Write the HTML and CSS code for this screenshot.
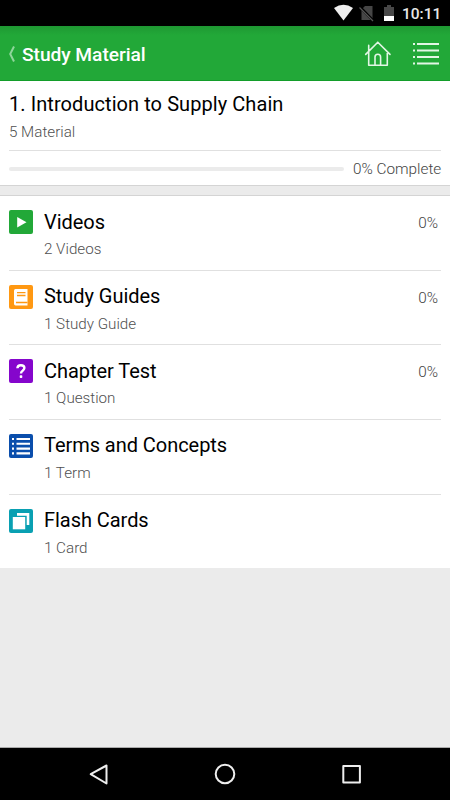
FILE: index.html
```html
<!DOCTYPE html>
<html lang="en">
<head>
<meta charset="utf-8">
<title>Study Material</title>
<link rel="stylesheet" href="styles.css">
</head>
<body>
<div class="status">
  <svg class="status-icons" width="64" height="26" viewBox="0 0 64 26">
    <path d="M0 8Q9.5 1.5 19 8L9.500 20.5Z" fill="#eee"/>
    <path d="M31 6H38.500V20H27.500V9.500Z" fill="#464646"/>
    <path d="M26 7L39.500 21" stroke="#000" stroke-width="2.600"/>
    <path d="M25.500 7.500L39 21" stroke="#555" stroke-width="1.200"/>
    <path d="M50 7H53V5H57V7H60V16H50Z" fill="#484848"/>
    <path d="M50 16H60V21H50Z" fill="#fff"/>
  </svg>
  <span class="clock">10:11</span>
</div>
<header class="bar">
  <svg class="back" width="8" height="18" viewBox="0 0 8 18"><path d="M6 1.5L2.2 9L6 16.5" fill="none" stroke="#8fd69b" stroke-width="2"/></svg>
  <h1 class="title">Study Material</h1>
  <svg class="home" width="28" height="28" viewBox="0 0 28 28" fill="none" stroke="#e2f6e5" stroke-width="1.6" stroke-linejoin="round" stroke-linecap="round"><path d="M1.7 14.4L13.8 2.2L26 14.4M4.7 11.5V25.2H23.3V11.8M4.7 10.5V5.4M11 25V17Q11 14.2 13.8 14.2Q16.6 14.2 16.6 17V25"/></svg>
  <svg class="menu" width="26" height="24" viewBox="0 0 26 24" stroke="#e2f6e5" stroke-width="2"><path d="M0 2H2M4 2H26M0 8.5H2M4 8.5H26M0 15H2M4 15H26M0 21.5H2M4 21.5H26"/></svg>
</header>
<section class="chapter">
  <h2 class="name">1. Introduction to Supply Chain</h2>
  <p class="sub">5 Material</p>
  <div class="progress"><span class="track"></span><span class="complete">0% Complete</span></div>
</section>
<ul class="list">
  <li class="item">
    <svg class="icon" viewBox="0 0 24 24"><rect width="24" height="24" rx="2" fill="#22a838"/><path d="M8.2 7V17.5L17.5 12.2Z" fill="#fff"/></svg>
    <div class="text"><h3 class="name">Videos</h3><p class="sub">2 Videos</p></div><span class="pct">0%</span>
  </li>
  <li class="item">
    <svg class="icon" viewBox="0 0 24 24"><rect width="24" height="24" rx="2" fill="#ff9812"/><path d="M6.5 4H18.500V20.500H6.500Q5 20.500 5 18.500V5.5Q5 4 6.5 4Z" fill="#fff"/><path d="M8 7.7H16.500M8 10.5H16.500M7 17.500H18.500" stroke="#ff9812" stroke-width="1.3"/></svg>
    <div class="text"><h3 class="name">Study Guides</h3><p class="sub">1 Study Guide</p></div><span class="pct">0%</span>
  </li>
  <li class="item">
    <svg class="icon" viewBox="0 0 24 24"><rect width="24" height="24" rx="2" fill="#8506cc"/><path d="M8.4 9.3Q8.5 6.2 11.9 6.2Q15.4 6.2 15.4 9Q15.4 10.3 13.6 11.7Q12 12.8 12 14.5" fill="none" stroke="#fff" stroke-width="2.4"/><rect x="10.7" y="16.3" width="2.6" height="2.6" rx=".7" fill="#fff"/></svg>
    <div class="text"><h3 class="name">Chapter Test</h3><p class="sub">1 Question</p></div><span class="pct">0%</span>
  </li>
  <li class="item">
    <svg class="icon" viewBox="0 0 24 24"><rect width="24" height="24" rx="2" fill="#0a4eac"/><path d="M3 5H5M7.5 5H21M3 9.8H5M7.5 9.8H21M3 14.6H5M7.5 14.6H21M3 19.4H5M7.5 19.4H21" stroke="#fff" stroke-width="2.1"/></svg>
    <div class="text"><h3 class="name">Terms and Concepts</h3><p class="sub">1 Term</p></div>
  </li>
  <li class="item">
    <svg class="icon" viewBox="0 0 24 24"><rect width="24" height="24" rx="2" fill="#09a0b2"/><path d="M8 4H20.3V16H17.7V6.7H8Z" fill="#fff"/><rect x="3.8" y="8" width="12.4" height="12.3" fill="#fff"/></svg>
    <div class="text"><h3 class="name">Flash Cards</h3><p class="sub">1 Card</p></div>
  </li>
</ul>
<nav class="nav">
  <svg width="450" height="52" viewBox="0 0 450 52" fill="none" stroke="#eee" stroke-width="2" stroke-linejoin="round"><path d="M106.5 17.5V35.5L90.7 26.2Z"/><circle cx="225" cy="26" r="9.3"/><rect x="343.3" y="18" width="16.6" height="16.6"/></svg>
</nav>
</body>
</html>
```
FILE: styles.css
```css
* { box-sizing: border-box; margin: 0; padding: 0; }
body { width: 450px; height: 800px; display: flex; flex-direction: column; background: #ebebeb; font-family: Roboto, sans-serif; color: #000; overflow: hidden; }
h1, h2, h3 { font-weight: 400; }
svg { display: block; flex: none; }
.status { height: 26px; background: #000; display: flex; justify-content: flex-end; padding-right: 9px; }
.status-icons { margin-right: 4px; }
.clock { width: 39px; font-size: 15.5px; line-height: 28px; font-weight: 500; color: #e8e8e8; white-space: nowrap; }
.bar { height: 55px; display: flex; align-items: center; padding: 1px 11px 0 8px; background: linear-gradient(#1e9832, #22a838 9px); border-bottom: 1px solid #139d2a; }
.title { margin: 2px 0 0 6px; flex: 1; font-size: 19.2px; letter-spacing: -.05px; font-weight: 500; color: #fff; line-height: 24px; }
.home { margin-right: 21px; }
.chapter { height: 105px; background: #fff; border-bottom: 1px solid #d4d4d4; padding: 10px 9px 0; }
.name { font-size: 20px; line-height: 26px; letter-spacing: .07px; }
.item .name { letter-spacing: -.05px; }
.sub { font-size: 15.2px; line-height: 20px; font-weight: 300; color: #505050; }
.chapter .sub { margin-top: 5px; }
.progress { display: flex; align-items: center; margin-top: 8px; border-top: 1px solid #e0e0e0; height: 36px; }
.track { flex: 1; height: 4px; background: #ebebeb; border-radius: 2px; margin-right: 9px; }
.complete, .pct { font-size: 15.3px; line-height: 20px; font-weight: 300; color: #444; }
.complete { width: 88px; margin-top: 1px; white-space: nowrap; }
.list { list-style: none; background: #fff; margin-top: 9px; border-top: 1px solid #d4d4d4; padding: 0 9px; }
.item { height: 74.65px; display: flex; align-items: flex-start; padding-top: 14px; border-bottom: 1px solid #e0e0e0; }
.item:last-child { border-bottom: 0; height: 73px; }
.icon { width: 24px; height: 24px; margin-right: 11px; }
.text { flex: 1; margin-top: -1.5px; }
.text .sub { margin-top: 4.6px; }
.pct { margin: 3px 3px 0 0; }
.nav { margin-top: auto; height: 53px; background: #000; border-top: 1px solid #aaa; }
```
